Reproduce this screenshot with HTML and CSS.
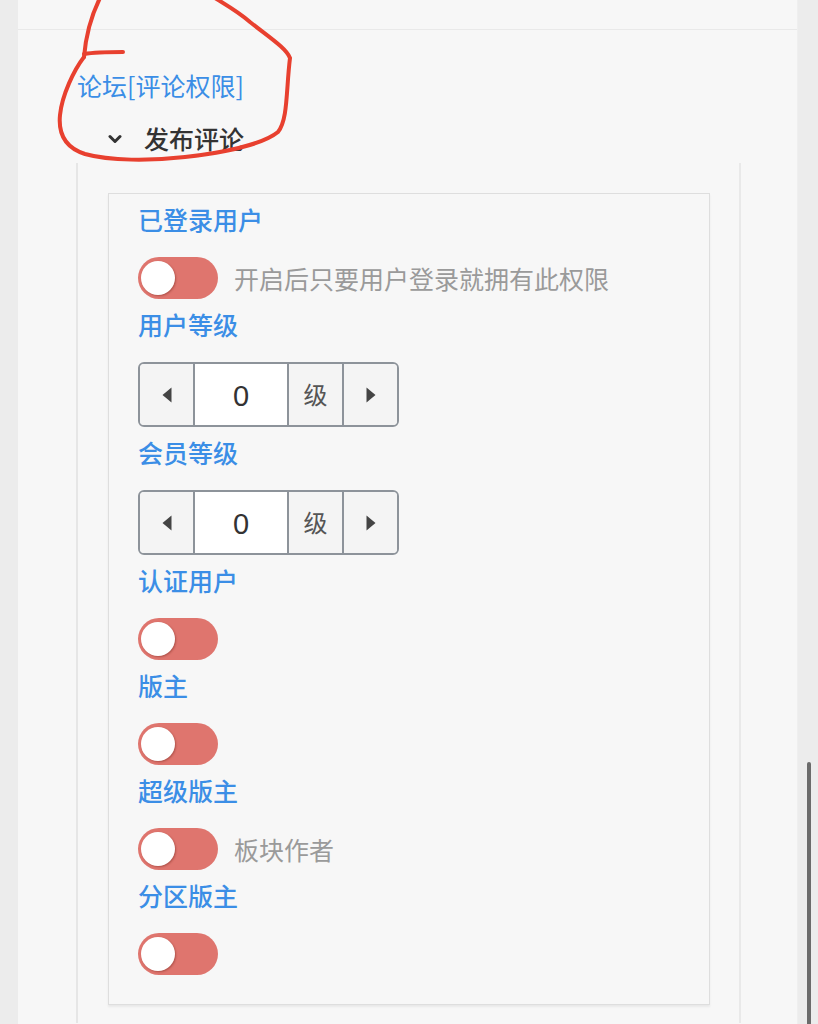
FILE: index.html
```html
<!DOCTYPE html>
<html lang="zh-CN">
<head>
<meta charset="utf-8">
<title>论坛[评论权限]</title>
<link rel="stylesheet" href="styles.css">
</head>
<body>
<div class="page">
  <div class="prev"></div>
  <div class="section">
    <div class="title">论坛[评论权限]</div>
    <div class="sub">
      <svg class="chev" width="14" height="10" viewBox="0 0 14 10"><path d="M2 2.5 L7 7.5 L12 2.5" fill="none" stroke="#333" stroke-width="3" stroke-linecap="round" stroke-linejoin="round"/></svg>
      <span>发布评论</span>
    </div>
    <div class="group">
      <div class="box">
        <div class="label">已登录用户</div>
        <div class="ctrl switch-row"><span class="switch"><span class="knob"></span></span><span class="desc">开启后只要用户登录就拥有此权限</span></div>

        <div class="label">用户等级</div>
        <div class="ctrl stepper">
          <span class="btn prev-btn"><svg width="10" height="16" viewBox="0 0 10 16"><path d="M9.5 0.5 L0.5 8 L9.5 15.5 Z" fill="#444"/></svg></span>
          <span class="val">0</span>
          <span class="unit">级</span>
          <span class="btn next-btn"><svg width="10" height="16" viewBox="0 0 10 16"><path d="M0.5 0.5 L9.5 8 L0.5 15.5 Z" fill="#444"/></svg></span>
        </div>

        <div class="label">会员等级</div>
        <div class="ctrl stepper">
          <span class="btn prev-btn"><svg width="10" height="16" viewBox="0 0 10 16"><path d="M9.5 0.5 L0.5 8 L9.5 15.5 Z" fill="#444"/></svg></span>
          <span class="val">0</span>
          <span class="unit">级</span>
          <span class="btn next-btn"><svg width="10" height="16" viewBox="0 0 10 16"><path d="M0.5 0.5 L9.5 8 L0.5 15.5 Z" fill="#444"/></svg></span>
        </div>

        <div class="label">认证用户</div>
        <div class="ctrl switch-row"><span class="switch"><span class="knob"></span></span></div>

        <div class="label">版主</div>
        <div class="ctrl switch-row"><span class="switch"><span class="knob"></span></span></div>

        <div class="label">超级版主</div>
        <div class="ctrl switch-row"><span class="switch"><span class="knob"></span></span><span class="desc">板块作者</span></div>

        <div class="label">分区版主</div>
        <div class="ctrl switch-row last"><span class="switch"><span class="knob"></span></span></div>
      </div>
    </div>
  </div>
</div>
<div class="scrollbar"></div>
<svg class="annot" width="300" height="170" viewBox="0 0 300 170">
  <path d="M100,-2 C92,14 86,34 84,57" fill="none" stroke="#e8402f" stroke-width="4" stroke-linecap="round"/>
  <path d="M84,54 C96,52 110,52 123,52" fill="none" stroke="#e8402f" stroke-width="4" stroke-linecap="round"/>
  <path d="M84,57 C74,70 62,95 60,115 C58,135 66,148 85,154 C110,161 150,161 185,157 C220,153 262,145 278,132 C288,120 286,90 290,58 C286,48 270,38 250,22 C240,13 228,6 215,-2" fill="none" stroke="#e8402f" stroke-width="4" stroke-linecap="round"/>
</svg>
</body>
</html>
```

FILE: styles.css
```css
html, body {
  margin: 0;
  padding: 0;
  height: 1024px;
  overflow: hidden;
  background: #ececec;
  font-family: "Noto Sans CJK SC", "Noto Sans", sans-serif;
}

.page {
  margin: 0 20px 0 18px;
  background: #f7f7f7;
  height: 1024px;
  border-right: 1px solid #efefef;
  box-sizing: border-box;
}

.prev {
  height: 29px;
  border-bottom: 1px solid #e9e9e9;
}

.section {
  padding-left: 58px;
  padding-top: 39px;
}

.title {
  font-size: 25px;
  line-height: 32px;
  color: #3b8ee6;
  margin-left: 1px;
}

.sub {
  display: flex;
  align-items: center;
  margin-top: 21px;
  padding-left: 32px;
  font-size: 25px;
  line-height: 32px;
  color: #333;
  font-weight: 500;
}

.chev {
  margin-right: 22px;
  margin-top: 2px;
}

.group {
  margin-top: 9px;
  width: 631px;
  border-left: 2px solid #e6e6e6;
  border-right: 2px solid #e9e9e9;
  padding: 30px 0 18px 30px;
  box-sizing: content-box;
}

.box {
  width: 602px;
  border: 1px solid #dedede;
  box-shadow: 0 2px 2px rgba(0, 0, 0, 0.06);
  background: #f7f7f7;
  padding: 8px 0 29px 29px;
  box-sizing: border-box;
}

.label {
  font-size: 25px;
  line-height: 35px;
  color: #3b8ee6;
  font-weight: 500;
  margin-bottom: 20px;
}

.ctrl {
  margin-bottom: 8px;
}

.ctrl.last {
  margin-bottom: 0;
}

.switch-row {
  display: flex;
  align-items: center;
  gap: 16px;
  height: 42px;
}

.switch {
  position: relative;
  display: inline-block;
  width: 80px;
  height: 42px;
  border-radius: 21px;
  background: #df756e;
  flex: none;
}

.knob {
  position: absolute;
  left: 3px;
  top: 4px;
  width: 34px;
  height: 34px;
  border-radius: 50%;
  background: #fff;
  box-shadow: 1px 1px 2px rgba(120, 40, 30, 0.45);
}

.desc {
  font-size: 25px;
  line-height: 35px;
  color: #9a9a9a;
}

.stepper {
  display: flex;
  width: 261px;
  height: 65px;
  border: 2px solid #8d939a;
  border-radius: 6px;
  box-sizing: border-box;
  overflow: hidden;
}

.stepper .btn {
  width: 53px;
  flex: none;
  background: #f4f4f4;
  display: flex;
  align-items: center;
  justify-content: center;
}

.stepper .prev-btn {
  border-right: 2px solid #8d939a;
}

.stepper .next-btn {
  border-left: 2px solid #8d939a;
}

.stepper .val {
  width: 92px;
  flex: none;
  background: #fff;
  display: flex;
  align-items: center;
  justify-content: center;
  padding-top: 3px;
  font-family: "Liberation Sans", Arial, sans-serif;
  font-size: 29px;
  color: #333;
  border-right: 2px solid #8d939a;
}

.stepper .unit {
  flex: 1;
  background: #f4f4f4;
  display: flex;
  align-items: center;
  justify-content: center;
  padding-bottom: 3px;
  font-size: 24px;
  color: #555;
}

.scrollbar {
  position: absolute;
  left: 807px;
  top: 762px;
  width: 4px;
  height: 270px;
  border-radius: 2px;
  background: #6b6b6b;
}

.annot {
  position: absolute;
  left: 0;
  top: 0;
  pointer-events: none;
}
```
